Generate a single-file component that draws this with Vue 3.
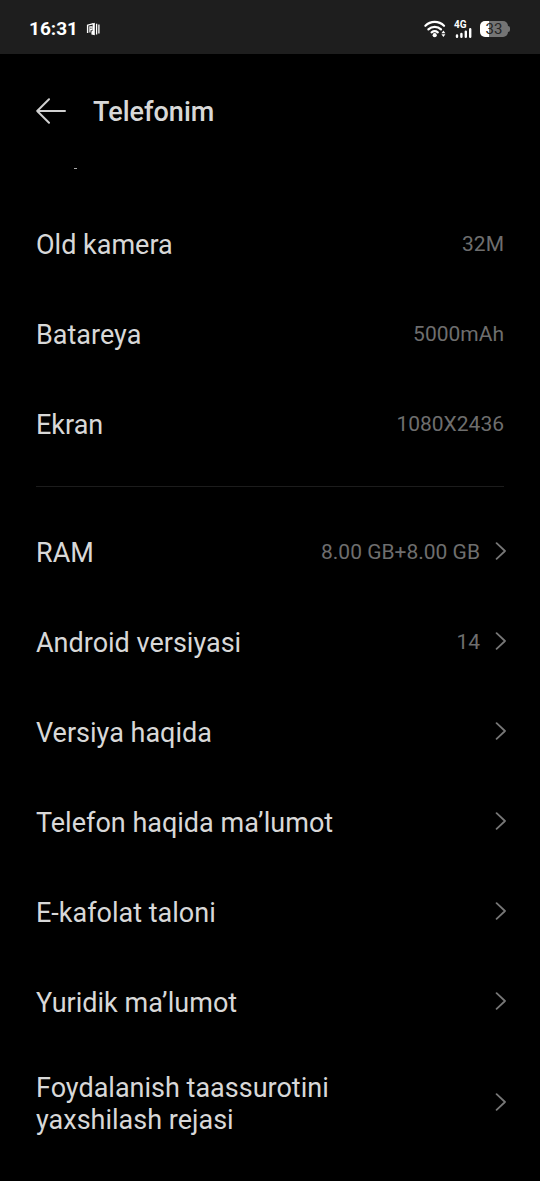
<script setup>
const specs = [
  { label: 'Old kamera', value: '32M' },
  { label: 'Batareya', value: '5000mAh' },
  { label: 'Ekran', value: '1080X2436' },
]

const links = [
  { label: 'RAM', value: '8.00 GB+8.00 GB' },
  { label: 'Android versiyasi', value: '14' },
  { label: 'Versiya haqida' },
  { label: 'Telefon haqida ma’lumot' },
  { label: 'E-kafolat taloni' },
  { label: 'Yuridik ma’lumot' },
  { label: 'Foydalanish taassurotini yaxshilash rejasi', tall: true },
]
</script>

<template>
  <div class="screen">
    <div class="status">
      <time class="clock">16:31</time>
      <svg class="app-icon" width="14" height="14" viewBox="0 0 14 14" aria-hidden="true">
        <path d="M1.6 11 V3.2 L7.4 1.6" fill="none" stroke="#fff" stroke-width="1.4" />
        <path d="M6.6 1.4 L8.8 0.8 V13.2 L5.4 12.6 V9.4 L6.8 8.6 Z" fill="#fff" />
        <path d="M3.9 10.6 V4.8 H6 V7.6 H4.4" fill="none" stroke="#fff" stroke-width="1.2" />
        <path d="M10.6 1.8 V12.4 M12.9 2.6 V11.4" stroke="#fff" stroke-width="1.3" />
      </svg>
      <div class="indicators">
        <svg width="22" height="18" viewBox="0 0 22 18" aria-hidden="true">
          <g fill="none" stroke="#fff" stroke-width="2.2" stroke-linecap="round">
            <path d="M1.4 5.8 A13.2 13.2 0 0 1 20 5.8" />
            <path d="M4.4 9.4 A9 9 0 0 1 17 9.4" />
            <path d="M7.6 12.3 A5 5 0 0 1 13.8 12.3" />
          </g>
          <circle cx="10.7" cy="15.2" r="2.1" fill="#fff" />
          <path d="M17.4 13.2 L19.4 10.4 L21.4 13.2 Z M17.4 14.2 H21.4 L19.4 17 Z" fill="#fff" />
        </svg>
        <div class="signal">
          <span class="network">4G</span>
          <svg class="bars" width="18" height="11" viewBox="0 0 18 11" aria-hidden="true">
            <path d="M3 7.4 V8.8 M7.4 6 V8.8 M11.8 3.6 V8.8 M16.2 1.2 V8.8" stroke="#fff" stroke-width="2.4" stroke-linecap="round" />
          </svg>
        </div>
        <div class="battery">
          <span class="cell">33</span>
          <span class="tip"></span>
        </div>
      </div>
    </div>

    <header class="header">
      <button class="back" type="button" aria-label="Orqaga">
        <svg width="30" height="26" viewBox="0 0 30 26" aria-hidden="true">
          <path d="M13 1.2 L1.2 13 L13 24.8 M1.2 13 H29" fill="none" stroke="#d0d0d0" stroke-width="2" stroke-linecap="round" stroke-linejoin="round" />
        </svg>
      </button>
      <h1 class="title">Telefonim</h1>
    </header>

    <main class="content">
      <div class="clipped"></div>
      <dl class="list">
        <div v-for="row in specs" :key="row.label" class="row">
          <dt class="label">{{ row.label }}</dt>
          <dd class="value">{{ row.value }}</dd>
        </div>
      </dl>
      <hr class="divider" />
      <nav class="list">
        <a v-for="row in links" :key="row.label" href="#" class="row" :class="{ tall: row.tall }">
          <span class="label">{{ row.label }}</span>
          <span v-if="row.value" class="value">{{ row.value }}</span>
          <svg class="chevron" width="11" height="18" viewBox="0 0 11 18" aria-hidden="true">
            <path d="M1.6 1.2 L10 9 L1.6 16.8" fill="none" stroke="#777" stroke-width="1.8" stroke-linecap="round" stroke-linejoin="round" />
          </svg>
        </a>
      </nav>
    </main>
  </div>
</template>

<style>
html,
body {
  background: #000;
}
body {
  margin: 0;
}
</style>

<style scoped>
.screen {
  box-sizing: border-box;
  min-height: 100vh;
  padding-bottom: 22px;
  background: #000;
  color: #d8d8d8;
  font-family: Roboto, "Noto Sans", sans-serif;
}
.status {
  display: flex;
  align-items: center;
  box-sizing: border-box;
  height: 54px;
  padding: 4px 30px 0 29px;
  background: #1e1e1e;
  color: #fff;
}
.clock {
  font-size: 19px;
  line-height: 24px;
  font-weight: 700;
}
.app-icon {
  margin-left: 8px;
}
.indicators {
  display: flex;
  align-items: center;
  gap: 8px;
  margin-left: auto;
}
.signal {
  display: flex;
  flex-direction: column;
  width: 18px;
}
.network {
  font-size: 10px;
  line-height: 10px;
  font-weight: 700;
}
.bars {
  margin-top: -2px;
}
.battery {
  display: flex;
  align-items: center;
}
.cell {
  width: 28px;
  border-radius: 5px;
  background: linear-gradient(to right, #fff 33%, #747474 33%);
  color: #242424;
  font-size: 15px;
  line-height: 16px;
  text-align: center;
}
.tip {
  width: 2px;
  height: 6px;
  border-radius: 0 2px 2px 0;
  background: #747474;
}
.header {
  display: flex;
  align-items: center;
  gap: 27px;
  height: 114px;
  padding: 0 36px;
}
.back {
  display: flex;
  padding: 0;
  border: 0;
  background: none;
}
.title {
  margin: 0;
  padding-top: 2px;
  font-size: 27px;
  line-height: 32px;
  font-weight: 500;
}
.content {
  padding: 0 36px;
}
.clipped {
  width: 3px;
  height: 1px;
  margin: 0 0 30px 38px;
  background: #a8a8a8;
}
.list {
  display: flex;
  flex-direction: column;
  margin: 0;
}
.row {
  display: flex;
  align-items: center;
  min-height: 90px;
  color: inherit;
  text-decoration: none;
}
.row.tall {
  min-height: 112px;
}
.label {
  flex: 1;
  padding-top: 2px;
  font-size: 27px;
  line-height: 32px;
}
.tall .label {
  padding-right: 120px;
}
.value {
  margin: 0;
  color: #6e6e6e;
  font-size: 21px;
  line-height: 24px;
}
.chevron {
  flex: none;
  margin: 0 -2px 2px 15px;
}
.divider {
  height: 1px;
  margin: 17px 0 20px;
  border: 0;
  background: #1c1c1c;
}
</style>
